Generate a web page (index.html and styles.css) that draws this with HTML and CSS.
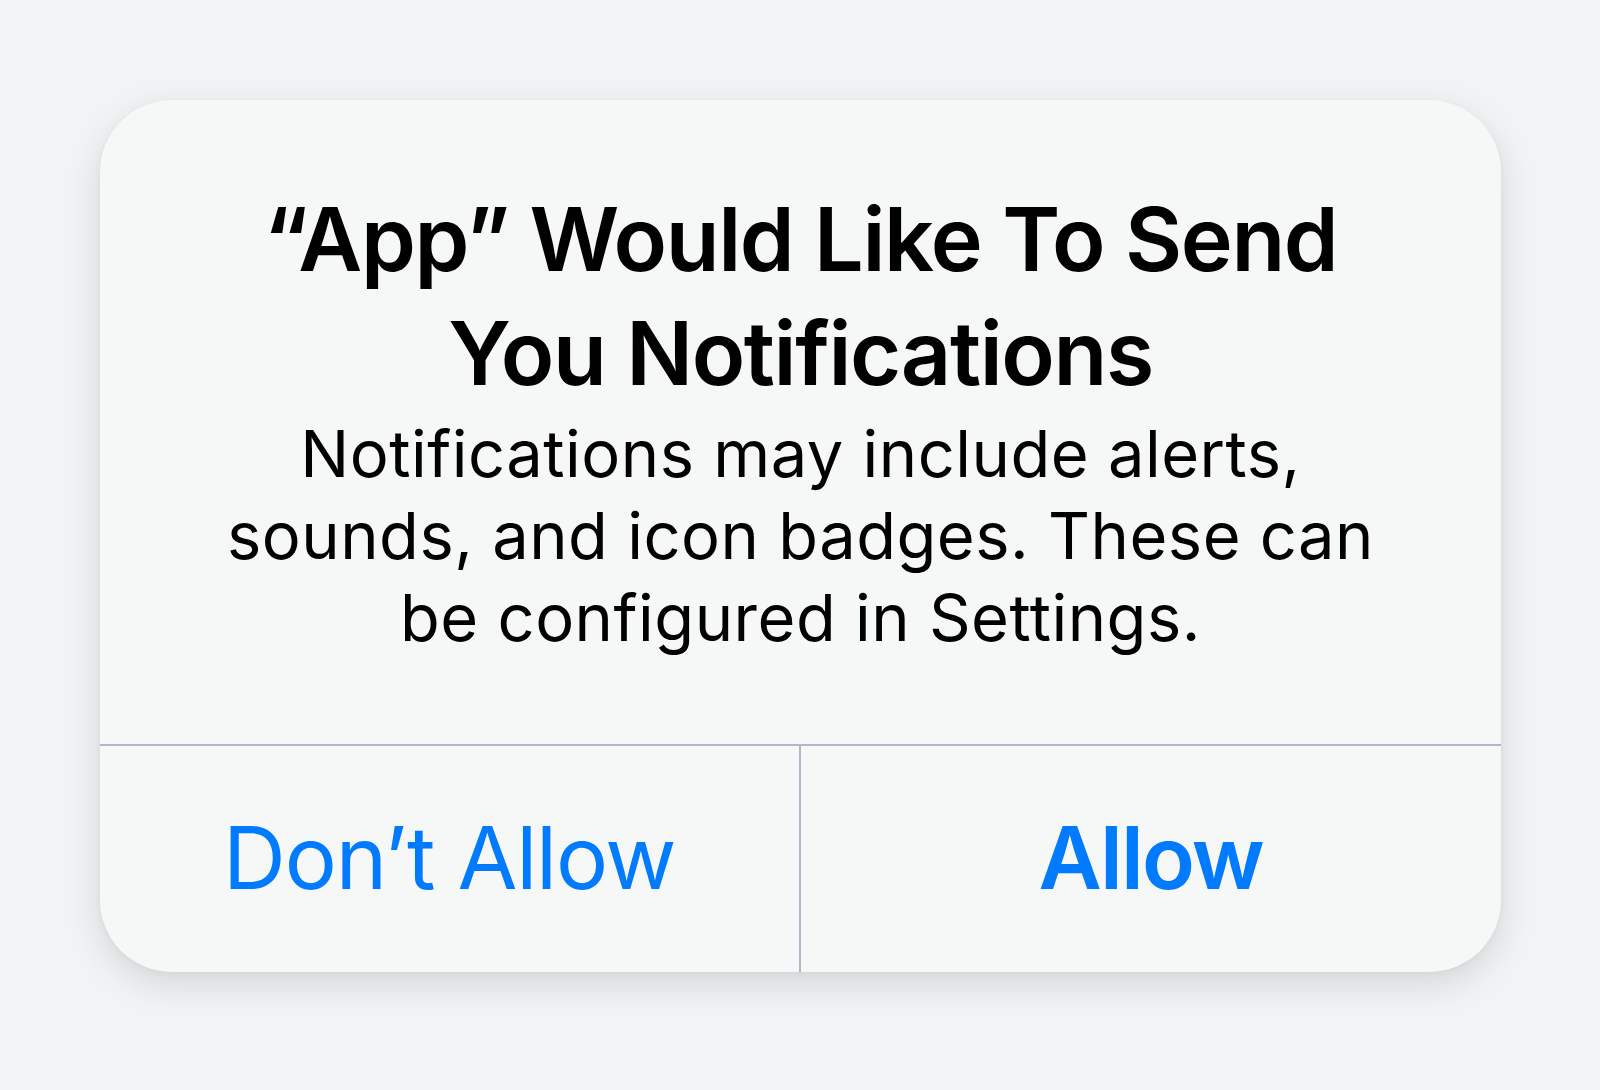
FILE: index.html
```html
<!DOCTYPE html>
<html lang="en">
<head>
  <meta charset="UTF-8" />
  <title>Notification Permission</title>
  <link rel="stylesheet" href="styles.css">
</head>
<body>
  <!-- Permission alert -->
  <div class="alert">
    <div class="alert-body">
      <h1 class="alert-title">“App” Would Like To Send<br>You Notifications</h1>
      <p class="alert-message">Notifications may include alerts,<br>sounds, and icon badges. These can<br>be configured in Settings.</p>
    </div>
    <div class="alert-actions">
      <button class="alert-button">Don’t Allow</button>
      <button class="alert-button primary">Allow</button>
    </div>
  </div>
</body>
</html>
```

FILE: styles.css
```css
html, body {
  margin: 0;
  height: 100%;
}

body {
  font-family: Inter, "Noto Sans", sans-serif;
  background: #f2f3f5;
  color: #000;
  padding: 100px 99px 0 100px;
  box-sizing: border-box;
}

.alert {
  width: 1401px;
  height: 872px;
  background: #f6f7f7;
  border-radius: 72px;
  box-shadow: 0 12px 36px rgba(0, 0, 0, 0.12), 0 2px 6px rgba(0, 0, 0, 0.04);
  display: flex;
  flex-direction: column;
  overflow: hidden;
}

.alert-body {
  flex: 0 0 auto;
  height: 646px;
  padding-top: 82px;
  box-sizing: border-box;
  text-align: center;
  border-bottom: 2px solid #b4b4cb;
}

.alert-title {
  margin: 0;
  font-size: 88px;
  line-height: 114px;
  font-weight: 600;
  letter-spacing: -1.4px;
}

.alert-message {
  margin: 3px 0 0;
  font-size: 65px;
  line-height: 82px;
  font-weight: 400;
  letter-spacing: 0.5px;
}

.alert-actions {
  flex: 1;
  display: grid;
  grid-template-columns: 1fr 1fr;
}

.alert-button {
  background: none;
  border: none;
  padding: 0 0 4px;
  font-family: inherit;
  font-size: 87px;
  font-weight: 400;
  letter-spacing: -1.2px;
  color: #007aff;
  cursor: pointer;
}

.alert-button:first-child {
  border-right: 2px solid #b4b4cb;
}

.alert-button.primary {
  font-weight: 600;
  letter-spacing: -1.8px;
}
```
